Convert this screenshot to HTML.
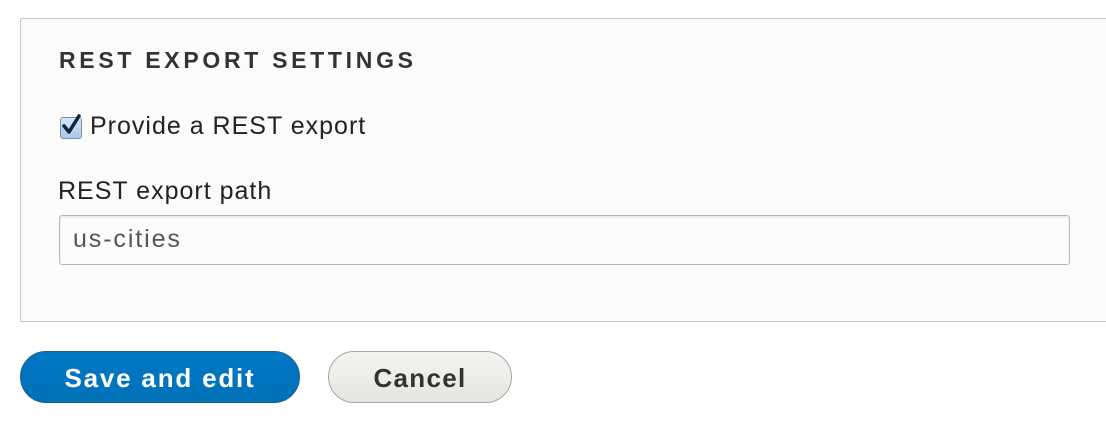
<!DOCTYPE html>
<html><head><style>
body{margin:0;width:1106px;height:426px;background:#fff;font-family:"Liberation Sans",sans-serif;position:relative;overflow:hidden;color:#222}
.fs{position:absolute;left:20px;top:18px;width:1100px;height:302px;border:1px solid #c8c8c8;border-radius:2px;background:#fbfbfa}
h2{position:absolute;left:38px;top:28px;margin:0;font-size:23px;font-weight:bold;letter-spacing:3.7px;color:#333}
.cb{position:absolute;left:39px;top:98px;width:20px;height:20px;border:1px solid #7a8fa8;border-radius:3px;background:linear-gradient(#d5e6f7,#a9c8ea)}
.lab{position:absolute;font-size:25px;letter-spacing:1px;color:#222}
.inp{position:absolute;left:38px;top:196px;width:1009px;height:48px;border:1px solid #b8b8b8;border-radius:3px;background:#fcfcfa;box-shadow:inset 0 1px 2px rgba(0,0,0,.1)}
.btn{position:absolute;top:351px;height:52px;border-radius:26px;font-size:26px;font-weight:bold;text-align:center;line-height:52px;box-sizing:border-box}
</style></head><body>
<div class="fs">
<h2>REST EXPORT SETTINGS</h2>
<div class="cb"><svg width="22" height="22" viewBox="0 0 22 22" style="position:absolute;left:-1px;top:-4px"><path d="M4 12 L9 18 L19 2" fill="none" stroke="#12233d" stroke-width="3.5" stroke-linecap="round" stroke-linejoin="round"/></svg></div>
<div class="lab" style="left:69px;top:93px">Provide a REST export</div>
<div class="lab" style="left:37px;top:158px">REST export path</div>
<div class="inp"><div class="lab" style="left:13px;top:9px;color:#555;letter-spacing:1.9px">us-cities</div></div>
</div>
<div class="btn" style="left:20px;width:280px;background:linear-gradient(#0078c4,#0071b8);border:1px solid #1e5c90;color:#fff;letter-spacing:1.8px">Save and edit</div>
<div class="btn" style="left:328px;width:184px;background:linear-gradient(#f4f4f0,#e6e5e0);border:1px solid #a6a6a6;color:#333;letter-spacing:1.3px">Cancel</div>
</body></html>
